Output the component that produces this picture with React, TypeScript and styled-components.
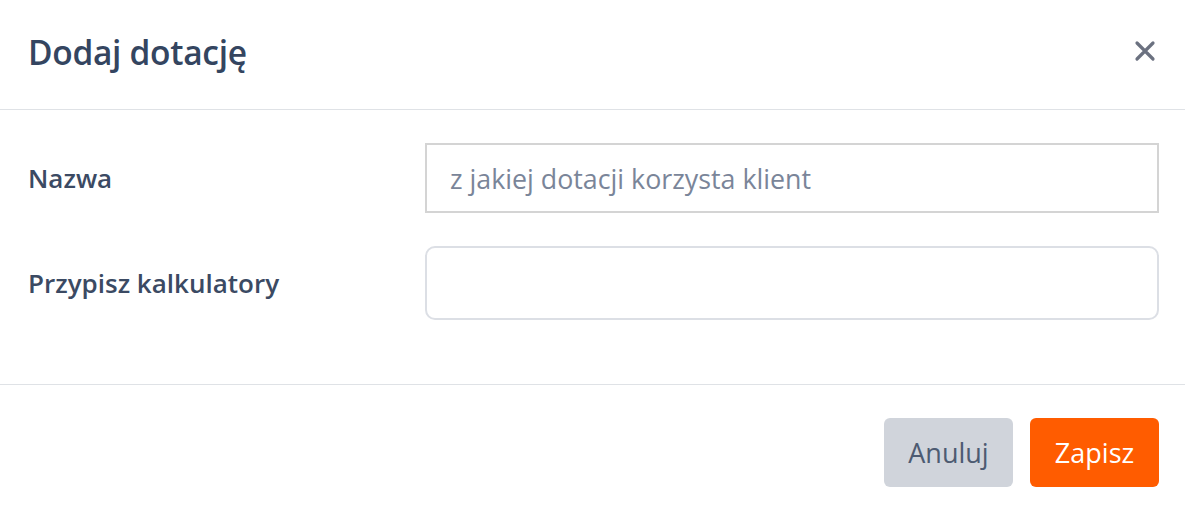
import React from "react";
import styled, { createGlobalStyle } from "styled-components";

const Global = createGlobalStyle`
  html, body { margin: 0; padding: 0; background: #fff; }
  body { font-family: "Open Sans", "Noto Sans", sans-serif; }
  * { box-sizing: border-box; }
`;

const Modal = styled.div`
  width: 1185px;
  height: 511px;
  display: flex;
  flex-direction: column;
  background: #fff;
`;

const Header = styled.div`
  height: 110px;
  display: flex;
  align-items: center;
  justify-content: space-between;
  padding: 0 28px 6px 28px;
  border-bottom: 1px solid #dfe2e6;
`;

const Title = styled.h2`
  margin: 0;
  font-size: 33.5px;
  font-weight: 600;
  color: #344560;
  letter-spacing: -0.3px;
`;

const CloseButton = styled.button`
  border: 0;
  background: none;
  padding: 0;
  width: 24px;
  height: 24px;
  display: flex;
  align-items: center;
  justify-content: center;
  cursor: pointer;
  margin-bottom: 2px;
`;

const Body = styled.div`
  height: 275px;
  padding: 33px 26px 0 28px;
  display: flex;
  flex-direction: column;
  gap: 33px;
  border-bottom: 1px solid #dfe2e6;
`;

const Row = styled.div`
  display: grid;
  grid-template-columns: 397px 1fr;
  align-items: center;
`;

const Label = styled.label`
  font-size: 26px;
  font-weight: 600;
  color: #3b4a63;
`;

const TextInput = styled.input<{ $rounded?: boolean }>`
  width: 100%;
  height: ${(p) => (p.$rounded ? "74px" : "70px")};
  border: ${(p) => (p.$rounded ? "2px solid #dcdfe5" : "2px solid #d4d4d4")};
  border-radius: ${(p) => (p.$rounded ? "10px" : "0")};
  padding: 0 23px;
  font-family: inherit;
  font-size: 26.8px;
  color: #3b4a63;
  outline: none;
  &::placeholder { color: #7a8599; }
`;

const Footer = styled.div`
  flex: 1;
  display: flex;
  justify-content: flex-end;
  align-items: flex-start;
  gap: 17px;
  padding: 33px 26px 0 28px;
`;

const Button = styled.button<{ $primary?: boolean }>`
  width: 129px;
  height: 69px;
  border: 0;
  border-radius: 6px;
  font-family: inherit;
  font-size: 27px;
  background: ${(p) => (p.$primary ? "#ff5c00" : "#d0d4db")};
  color: ${(p) => (p.$primary ? "#ffffff" : "#4d5b72")};
  cursor: pointer;
`;

export default function App() {
  return (
    <>
      <Global />
      <Modal>
        <Header>
          <Title>Dodaj dotację</Title>
          <CloseButton aria-label="Zamknij">
            <svg width="22" height="22" viewBox="0 0 22 22">
              <path d="M3 3 L19 19 M19 3 L3 19" stroke="#6b7180" strokeWidth="3.2" strokeLinecap="round" />
            </svg>
          </CloseButton>
        </Header>
        <Body>
          <Row>
            <Label>Nazwa</Label>
            <TextInput placeholder="z jakiej dotacji korzysta klient" />
          </Row>
          <Row>
            <Label>Przypisz kalkulatory</Label>
            <TextInput $rounded />
          </Row>
        </Body>
        <Footer>
          <Button>Anuluj</Button>
          <Button $primary>Zapisz</Button>
        </Footer>
      </Modal>
    </>
  );
}
